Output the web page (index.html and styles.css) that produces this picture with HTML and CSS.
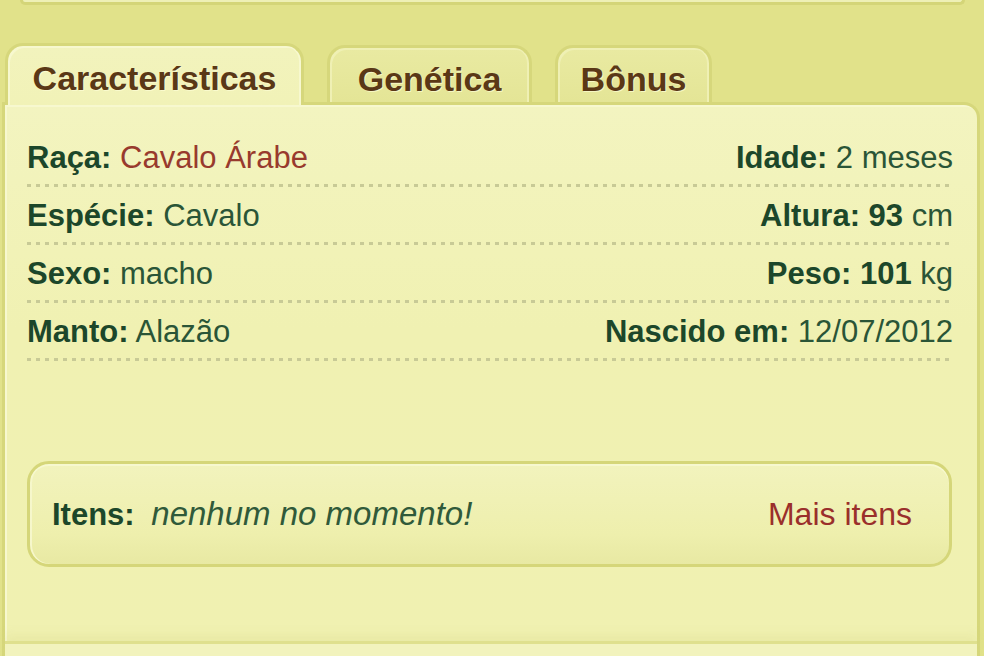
FILE: index.html
```html
<!DOCTYPE html>
<html lang="pt-BR">
<head>
  <meta charset="UTF-8" />
  <title>Cavalo - Características</title>
  <link rel="stylesheet" href="styles.css">
</head>
<body>
  <!-- bottom of the panel above -->
  <div class="top-panel"></div>

  <!-- Tabs -->
  <div class="tabs">
    <div class="tab tab-active tab-carac">Características</div>
    <div class="tab tab-gen">Genética</div>
    <div class="tab tab-bonus">Bônus</div>
  </div>

  <div class="panel">
    <div class="rows">
      <div class="row">
        <span><b>Raça:</b> <a class="link" href="#">Cavalo Árabe</a></span>
        <span><b>Idade:</b> 2 meses</span>
      </div>
      <div class="row">
        <span><b>Espécie:</b> Cavalo</span>
        <span><b>Altura:</b> <b>93</b> cm</span>
      </div>
      <div class="row">
        <span><b>Sexo:</b> macho</span>
        <span><b>Peso:</b> <b>101</b> kg</span>
      </div>
      <div class="row">
        <span><b>Manto:</b> Alazão</span>
        <span><b>Nascido em:</b> 12/07/2012</span>
      </div>
    </div>

    <!-- Items box -->
    <div class="items">
      <div class="items-text">
        <b>Itens:</b>
        <em>nenhum no momento!</em>
      </div>
      <a class="link" href="#">Mais itens</a>
    </div>

    <div class="panel-foot"></div>
  </div>
</body>
</html>
```

FILE: styles.css
```css
/* Global */
* {
  box-sizing: border-box;
}
body {
  margin: 0;
  background: #e1e28a;
  font-family: 'Liberation Sans', Arial, sans-serif;
  overflow: hidden;
  height: 656px;
}

/* Panel above (only its bottom edge is visible) */
.top-panel {
  height: 5px;
  margin: 0 19px 0 20px;
  background: #eef0b6;
  border: 3px solid #d4d578;
  border-top: none;
  border-radius: 0 0 12px 12px;
}

/* Tabs */
.tabs {
  display: flex;
  align-items: flex-end;
  gap: 23px;
  margin-top: 38px;
  padding-left: 5px;
  height: 59px;
}
.tab {
  height: 57px;
  padding-top: 11px;
  text-align: center;
  font-size: 34px;
  font-weight: bold;
  line-height: 40px;
  color: #5a3816;
  text-shadow: 1px 1px 0 rgba(255, 255, 215, 0.7);
  background: linear-gradient(#e9eaa2, #e4e596);
  border: 3px solid #d6d77b;
  border-bottom: none;
  border-radius: 18px 18px 0 0;
  box-shadow: inset 2px 2px 0 #eff0b4, inset -2px 0 0 #eff0b4;
}
.tab-active {
  position: relative;
  z-index: 1;
  height: 62px;
  padding-top: 12px;
  margin-bottom: -3px;
  background: linear-gradient(#f2f3bd, #f1f2b7);
  box-shadow: inset 2px 2px 0 #f7f8cf, inset -2px 0 0 #f7f8cf;
}
.tab-carac { width: 299px; }
.tab-gen { width: 205px; }
.tab-bonus { width: 157px; }

/* Main panel */
.panel {
  width: 978px;
  margin-left: 2px;
  height: 560px;
  padding-top: 24px;
  background: linear-gradient(#f3f4c0, #f0f1b2 40%, #f0f1b1);
  border: 3px solid #d6d77b;
  border-bottom: none;
  border-radius: 0 16px 0 0;
  box-shadow: inset 2px 2px 0 #f7f8cf;
}
.rows {
  padding: 0 24px 0 22px;
}
.row {
  display: flex;
  justify-content: space-between;
  padding: 12px 0;
  height: 58px;
  font-size: 31px;
  line-height: 34px;
  color: #2a5537;
  background-image: linear-gradient(to right, #c8ca96 4px, transparent 4px);
  background-size: 9px 3px;
  background-repeat: repeat-x;
  background-position: left bottom;
}
.row b {
  color: #1c472a;
}
.link {
  color: #983a2d;
  text-decoration: none;
}

/* Items box */
.items {
  display: flex;
  align-items: center;
  justify-content: space-between;
  height: 106px;
  margin: 100px 25px 0 22px;
  padding: 0 37px 0 22px;
  font-size: 31px;
  background: linear-gradient(#f2f3bd, #eeefad 70%, #e8e9a3);
  border: 3px solid #d5d679;
  border-radius: 22px;
  box-shadow: inset 0 2px 0 #f7f8cf, inset 2px 0 0 #f6f7cb;
}
.items-text b {
  color: #1c472a;
  margin-right: 8px;
}
.items-text em {
  font-size: 33px;
  color: #305a3a;
}
.items .link {
  font-size: 32px;
  color: #9a2f2b;
}

/* Bottom divider */
.panel-foot {
  margin-top: 74px;
  height: 20px;
  border-top: 3px solid #dfe08e;
  background: #f2f3bd;
  box-shadow: 0 -6px 10px rgba(215, 216, 130, 0.25);
}
```
